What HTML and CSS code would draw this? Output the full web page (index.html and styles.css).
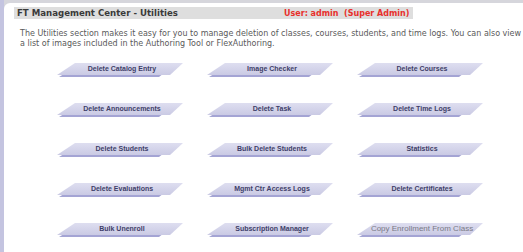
FILE: index.html
```html
<!DOCTYPE html>
<html lang="en">
<head>
  <meta charset="UTF-8">
  <title>FT Management Center - Utilities</title>
  <link rel="stylesheet" href="styles.css">
</head>
<body>
  <div class="frame">
    <div class="panel">
      <div class="title">
        <span class="title-text">FT Management Center - Utilities</span>
        <span class="user">User: admin&nbsp; (Super Admin)</span>
      </div>
      <p class="intro">The Utilities section makes it easy for you to manage deletion of classes, courses, students, and time logs. You can also view a list of images included in the Authoring Tool or FlexAuthoring.</p>
      <div class="grid">
        <a class="btn">Delete Catalog Entry</a>
        <a class="btn">Image Checker</a>
        <a class="btn">Delete Courses</a>
        <a class="btn">Delete Announcements</a>
        <a class="btn">Delete Task</a>
        <a class="btn">Delete Time Logs</a>
        <a class="btn">Delete Students</a>
        <a class="btn">Bulk Delete Students</a>
        <a class="btn">Statistics</a>
        <a class="btn">Delete Evaluations</a>
        <a class="btn">Mgmt Ctr Access Logs</a>
        <a class="btn">Delete Certificates</a>
        <a class="btn">Bulk Unenroll</a>
        <a class="btn">Subscription Manager</a>
        <a class="btn off">Copy Enrollment From Class</a>
      </div>
    </div>
  </div>
</body>
</html>
```

FILE: styles.css
```css
*{
  margin: 0;
  padding: 0;
}
body{
  width: 523px;
  height: 252px;
  overflow: hidden;
  background: #fff;
  font-family: "DejaVu Sans", Verdana, sans-serif;
}
.frame{
  height: 252px;
  background: #d6d6dc;
  border-left: 4px solid #c4c4e0;
  padding-top: 3px;
}
.panel{
  height: 249px;
  background: #fff;
  border-top-left-radius: 6px;
  padding-top: 4px;
}
.title{
  margin-left: 10px;
  width: 399px;
  height: 12px;
  background: #dedede;
  display: flex;
  align-items: center;
  font-size: 8px;
  font-weight: bold;
  white-space: nowrap;
}
.title-text{
  color: #3a3a3a;
  font-size: 8.6px;
  padding-left: 3px;
  width: 267px;
}
.user{
  color: #e8302c;
}
.intro{
  margin: 10px 0 0 16px;
  width: 502px;
  font-size: 8px;
  line-height: 10px;
  color: #5a5a5a;
}
.grid{
  margin: 14px 0 0 53px;
  display: grid;
  grid-template-columns: repeat(3, 126px);
  column-gap: 24px;
  row-gap: 27px;
}
.btn{
  position: relative;
  z-index: 0;
  display: block;
  height: 13px;
  line-height: 11px;
  text-align: center;
  font-family: "Liberation Sans", Arial, sans-serif;
  font-size: 7px;
  font-weight: bold;
  color: #3e3e68;
  padding-left: 4px;
}
.btn::before{
  content: "";
  position: absolute;
  left: 2px;
  right: 10px;
  top: 3px;
  bottom: -1px;
  background: #a4a4d4;
  clip-path: polygon(18px 0, 100% 0, calc(100% - 14px) 100%, 0 100%);
  z-index: -1;
}
.btn::after{
  content: "";
  position: absolute;
  left: 0;
  right: 0;
  top: 0;
  height: 12px;
  background: linear-gradient(#dedef0, #cacae4);
  clip-path: polygon(18px 0, 100% 0, calc(100% - 13px) 100%, 0 100%);
  z-index: -1;
}
.off{
  color: #7a7a86;
  font-size: 8px;
  font-weight: normal;
}
```
